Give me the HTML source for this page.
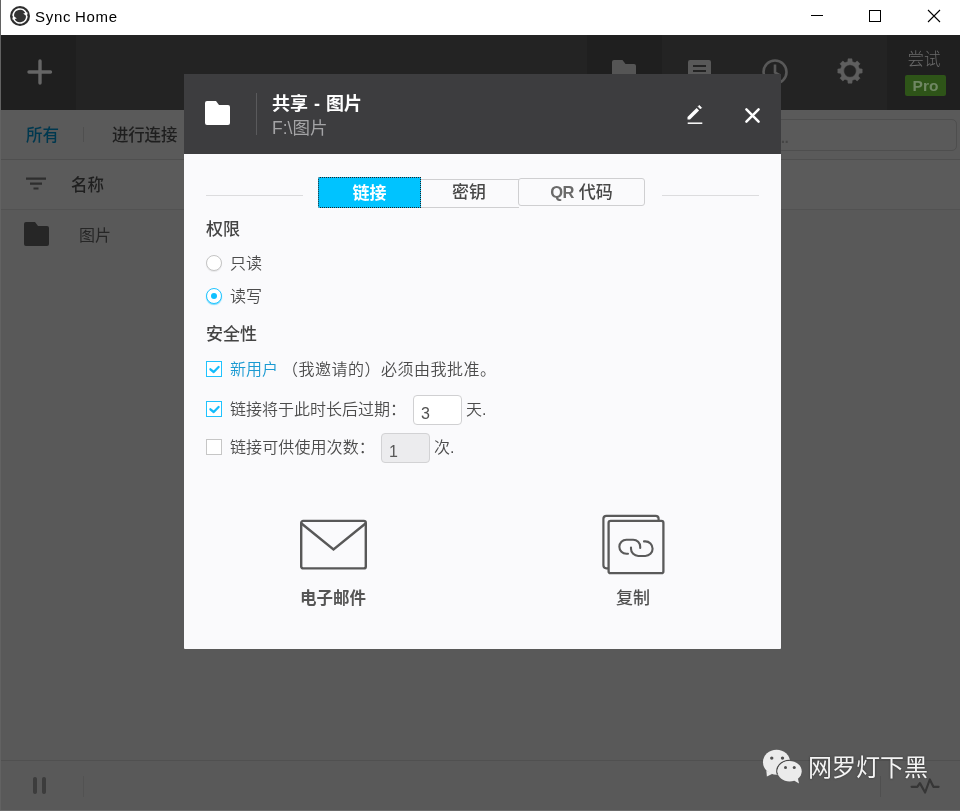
<!DOCTYPE html>
<html lang="zh-CN">
<head>
<meta charset="utf-8">
<title>Sync Home</title>
<style>
*{box-sizing:border-box;margin:0;padding:0}
html,body{width:960px;height:811px;overflow:hidden;background:#595959}
body{position:relative;font-family:"Liberation Sans","Noto Sans CJK SC",sans-serif;font-size:16px;color:#4a4a4a}
.abs{position:absolute}
#titlebar,#app,#dialog,#wm{will-change:transform}
#titlebar{left:0;top:0;width:960px;height:35px;background:#fff}
#titlebar .ttl{left:35px;top:7px;font-size:15px;color:#000;line-height:20px;letter-spacing:0.7px;word-spacing:-1px}
#app{left:1px;top:35px;width:959px;height:775px;background:#595959}
#toolbar{left:0;top:0;width:959px;height:75px;background:#232323}
#plus{left:0;top:0;width:75px;height:75px;background:#1f1f1f}
#tb-folder{left:586px;top:0;width:75px;height:75px;background:#1f1f1f}
#tb-pro{left:886px;top:0;width:73px;height:75px;background:#1f1f1f}
#tabs{left:0;top:75px;width:959px;height:50px;background:#5a5a5a;border-bottom:1px solid #4f4f4f}
#colhead{left:0;top:125px;width:959px;height:50px;background:#5b5b5b;border-bottom:1px solid #525252}
#statusbar{left:0;top:725px;width:959px;height:50px;border-top:1px solid #505050}
#dialog{left:184px;top:74px;width:597px;height:575px;border-radius:1px;background:#fafafc}
#dhead{left:0;top:0;width:597px;height:80px;background:#3d3d3f}
.cjk{font-family:"Liberation Sans","Noto Sans CJK SC",sans-serif}
#lborder{left:0;top:0;width:1px;height:811px;background:#626262}
#bborder{left:0;top:810px;width:960px;height:1px;background:#6c6c6c}
</style>
</head>
<body>
<div id="titlebar" class="abs">
  <svg class="abs" style="left:9px;top:4.900px" width="22" height="22" viewBox="0 0 22 22">
    <circle cx="11" cy="11" r="10" fill="#2e2e2e"/>
    <circle cx="11" cy="11" r="6.200" fill="#343434"/>
    <path d="M4.200 11.300A6.800 6.800 0 0 1 17.300 8.300" fill="none" stroke="#fff" stroke-width="1.700"/>
    <path d="M17.800 10.700A6.800 6.800 0 0 1 4.700 13.700" fill="none" stroke="#fff" stroke-width="1.700"/>
    <path d="M14.200 8.600L18.700 7.500L17.900 11.600z" fill="#fff"/>
    <path d="M7.800 13.400L3.300 14.500L4.100 10.400z" fill="#fff"/>
  </svg>
  <div class="abs ttl">Sync Home</div>
  <svg class="abs" style="left:800px;top:0" width="160" height="35" viewBox="0 0 160 35">
    <path d="M11 15.500h12" stroke="#000" stroke-width="1"/>
    <rect x="69.500" y="10.500" width="11" height="11" fill="none" stroke="#000" stroke-width="1"/>
    <path d="M128 10l12 12M140 10l-12 12" stroke="#000" stroke-width="1.100"/>
  </svg>
</div>

<div id="app" class="abs">
  <div id="toolbar" class="abs">
    <div id="plus" class="abs">
      <svg class="abs" style="left:26px;top:24px" width="26" height="26" viewBox="0 0 26 26"><path d="M13 2v22M2 13h21.500" stroke="#666" stroke-width="3.400" stroke-linecap="round"/></svg>
    </div>
    <div id="tb-folder" class="abs">
      <svg class="abs" style="left:25px;top:25px" width="24" height="22" viewBox="0 0 24 22"><path d="M2 0h8.500l3 4h8.500a2 2 0 0 1 2 2v14a2 2 0 0 1-2 2H2a2 2 0 0 1-2-2V2a2 2 0 0 1 2-2z" fill="#555"/></svg>
    </div>
    <svg class="abs" style="left:686px;top:24px" width="26" height="26" viewBox="0 0 26 26"><path d="M3 1h19a2 2 0 0 1 2 2v14a2 2 0 0 1-2 2H8l-7 6V3a2 2 0 0 1 2-2z" fill="#585858"/><path d="M6 7h13M6 12h13" stroke="#232323" stroke-width="2.200"/></svg>
    <svg class="abs" style="left:759.500px;top:22.500px" width="28" height="28" viewBox="0 0 28 28"><circle cx="14" cy="14" r="11.500" fill="none" stroke="#585858" stroke-width="2.600"/><path d="M14 6.500v8l5.500 3.200" fill="none" stroke="#585858" stroke-width="2.600"/></svg>
    <svg class="abs" style="left:834.500px;top:22.250px" width="28" height="28" viewBox="0 0 28 28"><path fill="#5e5e5e" stroke="#5e5e5e" stroke-width="0.600" stroke-linejoin="round" fill-rule="evenodd" d="M11.81 4.65 L12.04 1.86 L15.96 1.86 L16.19 4.65 L19.06 5.84 L21.20 4.03 L23.97 6.80 L22.16 8.94 L23.35 11.81 L26.14 12.04 L26.14 15.96 L23.35 16.19 L22.16 19.06 L23.97 21.20 L21.20 23.97 L19.06 22.16 L16.19 23.35 L15.96 26.14 L12.04 26.14 L11.81 23.35 L8.94 22.16 L6.80 23.97 L4.03 21.20 L5.84 19.06 L4.65 16.19 L1.86 15.96 L1.86 12.04 L4.65 11.81 L5.84 8.94 L4.03 6.80 L6.80 4.03 L8.94 5.84Z M14 7.700a6.300 6.300 0 1 0 0 12.600a6.300 6.300 0 1 0 0-12.600z"/></svg>
    <div id="tb-pro" class="abs">
      <div class="abs" style="left:1px;top:14px;width:72px;text-align:center;font-size:16.500px;line-height:20px;color:#6a6a6a;font-weight:300">尝试</div>
      <div class="abs" style="left:18px;top:39.500px;width:41px;height:21px;background:#2e5418;border-radius:2px;color:#6f8763;font-weight:bold;font-size:15.500px;line-height:21px;text-align:center">Pro</div>
    </div>
  </div>

  <div id="tabs" class="abs">
    <div class="abs" style="left:25px;top:14px;font-size:16.500px;line-height:22px;color:#00384f;font-weight:500">所有</div>
    <div class="abs" style="left:82px;top:17px;width:1px;height:15px;background:#4f4f4f"></div>
    <div class="abs" style="left:111px;top:14px;font-size:16.500px;line-height:22px;color:#1e1e1e;font-weight:500;letter-spacing:-0.2px">进行连接</div>
    <div class="abs" style="left:700px;top:9px;width:256px;height:32px;border:1px solid #4e4e4e;border-radius:5px;background:#5a5a5a"></div>
    <div class="abs" style="left:776px;top:20px;font-size:14px;color:#454545;font-weight:bold">...</div>
  </div>

  <div id="colhead" class="abs">
    <svg class="abs" style="left:24px;top:16px" width="22" height="16" viewBox="0 0 22 16"><path d="M1 2.700h20M5 7.600h12M8.500 12.500h5" stroke="#2e2e2e" stroke-width="2.200"/></svg>
    <div class="abs" style="left:70px;top:13.500px;font-size:16.500px;line-height:22px;color:#1f1f1f;font-weight:500">名称</div>
  </div>

  <div class="abs" style="left:0;top:175px;width:959px;height:50px">
    <svg class="abs" style="left:23px;top:12px" width="25" height="24" viewBox="0 0 25 24"><path d="M2 0h9l3 4h9a2 2 0 0 1 2 2v16a2 2 0 0 1-2 2H2a2 2 0 0 1-2-2V2a2 2 0 0 1 2-2z" fill="#262626"/></svg>
    <div class="abs" style="left:78px;top:15px;font-size:16px;line-height:22px;color:#262626;font-weight:400">图片</div>
  </div>

  <div id="statusbar" class="abs">
    <div class="abs" style="left:32px;top:16px;width:4px;height:17px;background:#3c3c3c;border-radius:2px"></div>
    <div class="abs" style="left:41px;top:16px;width:4px;height:17px;background:#3c3c3c;border-radius:2px"></div>
    <div class="abs" style="left:82px;top:15px;width:1px;height:21px;background:#525252"></div>
    <div class="abs" style="left:879px;top:15px;width:1px;height:21px;background:#4f4f4f"></div>
    <svg class="abs" style="left:908px;top:14px" width="32" height="20" viewBox="0 0 32 20"><path d="M2.600 11.800H8.300L10.900 8.100L16.100 17.500L20.800 4.500L24.400 11.800H29.600" fill="none" stroke="#363636" stroke-width="2.200" stroke-linejoin="round" stroke-linecap="round"/></svg>
  </div>
</div>
<div id="lborder" class="abs"></div>
<div id="bborder" class="abs"></div>

<!-- watermark -->
<svg class="abs" style="left:760px;top:745px" width="46" height="42" viewBox="0 0 46 42">
  <ellipse cx="16.550" cy="17.200" rx="13.550" ry="12.500" fill="#ebebeb"/>
  <path d="M6.300 25.500L6.900 31.400L12.500 28.800z" fill="#ebebeb"/>
  <circle cx="11.750" cy="13.100" r="1.700" fill="#505050"/><circle cx="22.500" cy="13.100" r="1.700" fill="#505050"/>
  <path d="M17.500 29.600A12.700 10.900 0 0 1 29.900 15.400" fill="none" stroke="#484848" stroke-width="1.400"/>
  <ellipse cx="29.600" cy="26.300" rx="12.100" ry="10.300" fill="#ebebeb"/>
  <path d="M34 35.500L39 38.400L37.800 33z" fill="#ebebeb"/>
  <circle cx="25.500" cy="22.500" r="1.500" fill="#505050"/><circle cx="34.250" cy="22.500" r="1.500" fill="#505050"/>
</svg>
<div id="wm" class="abs" style="left:808px;top:753px;font-size:24px;line-height:30px;color:#f4f4f4;white-space:nowrap;text-shadow:0 0 2px rgba(40,40,40,.8)">网罗灯下黑</div>

<div id="dialog" class="abs">
  <div id="dhead" class="abs">
    <svg class="abs" style="left:21px;top:27px" width="25" height="24" viewBox="0 0 25 24"><path d="M2 0h9l3 4h9a2 2 0 0 1 2 2v16a2 2 0 0 1-2 2H2a2 2 0 0 1-2-2V2a2 2 0 0 1 2-2z" fill="#fff"/></svg>
    <div class="abs" style="left:72px;top:19px;width:1px;height:42px;background:#5a5a5c"></div>
    <div class="abs" style="left:88px;top:18px;font-size:18px;line-height:24px;color:#fff;font-weight:bold;white-space:nowrap;word-spacing:1px">共享 - 图片</div>
    <div class="abs" style="left:88px;top:42.500px;font-size:17.500px;line-height:22px;color:#a4a4a6;white-space:nowrap;font-weight:400">F:\图片</div>
    <svg class="abs" style="left:501px;top:28px" width="20" height="24" viewBox="0 0 20 24"><path d="M2.500 17.500V15L11.600 5.900L14.100 8.400L5 17.500z" fill="#fff"/><path d="M13 4.600L14.300 3.300L16.700 5.700L15.400 7z" fill="#fff" stroke="#fff" stroke-width="0.500" stroke-linejoin="round"/><path d="M2.700 21.200h14.600" stroke="#fff" stroke-width="1.500"/></svg>
    <svg class="abs" style="left:559px;top:33px" width="19" height="18" viewBox="0 0 19 18"><path d="M3.400 2.400L15.600 14.600M15.600 2.400L3.400 14.600" stroke="#fff" stroke-width="2.500" stroke-linecap="round"/></svg>
  </div>

  <!-- tab strip -->
  <div class="abs" style="left:22px;top:121px;width:97px;height:1px;background:#dcdcde"></div>
  <div class="abs" style="left:478px;top:121px;width:97px;height:1px;background:#dcdcde"></div>
  <div class="abs" style="left:134px;top:103px;width:103px;height:31px;background:#00c3ff;border-radius:2px 0 0 2px;outline:1px dotted #222;outline-offset:-1px"></div>
  <div class="abs" style="left:134px;top:107.500px;width:103px;text-align:center;font-size:17px;line-height:24px;color:#fff;font-weight:bold">链接</div>
  <div class="abs" style="left:237px;top:105px;width:98px;height:29px;border:1px solid #cfcfd1;border-left:none;border-right:none;background:#fafafc"></div>
  <div class="abs" style="left:236px;top:107px;width:98px;text-align:center;font-size:17px;line-height:24px;color:#484848;font-weight:500">密钥</div>
  <div class="abs" style="left:334px;top:104px;width:127px;height:28px;border:1px solid #cfcfd1;border-radius:3px;background:#fafafc"></div>
  <div class="abs" style="left:334px;top:106px;width:127px;text-align:center;font-size:17px;line-height:24px;color:#484848;font-weight:500;white-space:nowrap"><span style="font-weight:bold;font-size:16.500px;color:#6a6a6a;letter-spacing:-0.500px">QR</span> 代码</div>

  <div class="abs" style="left:22px;top:143.500px;font-size:17px;line-height:24px;color:#444;font-weight:500">权限</div>
  <div class="abs" style="left:22px;top:181px;width:16px;height:16px;border:1.500px solid #c4c4c4;border-radius:50%;background:#fff;box-shadow:0 1px 1px rgba(0,0,0,.08)"></div>
  <div class="abs" style="left:46px;top:177.800px;font-size:16px;line-height:24px;color:#4c4c4c;font-weight:350">只读</div>
  <div class="abs" style="left:22px;top:214px;width:16px;height:16px;border:1.700px solid #22c5ff;border-radius:50%;background:#fff;box-shadow:0 1px 1px rgba(0,190,255,.55)"></div>
  <div class="abs" style="left:26.600px;top:218.600px;width:6.800px;height:6.800px;border-radius:50%;background:#0fc0ff"></div>
  <div class="abs" style="left:46px;top:210.800px;font-size:16px;line-height:24px;color:#4c4c4c;font-weight:350">读写</div>

  <div class="abs" style="left:22px;top:249px;font-size:17px;line-height:24px;color:#444;font-weight:500">安全性</div>

  <div class="abs" style="left:22px;top:287px;width:16px;height:16px;border:1.500px solid #1fc3ff;background:#fff"></div>
  <svg class="abs" style="left:22px;top:287px" width="16" height="16" viewBox="0 0 16 16"><path d="M4.400 8.300L7.700 11L12.600 6" fill="none" stroke="#14bcfb" stroke-width="2.300" stroke-linecap="round" stroke-linejoin="round"/></svg>
  <div class="abs" style="left:46px;top:283.800px;font-size:16px;line-height:24px;color:#4c4c4c;font-weight:350;white-space:nowrap"><span style="color:#1a9ad2">新用户</span><span style="margin-left:4px;letter-spacing:0.500px">（我邀请的）必须由我批准。</span></div>

  <div class="abs" style="left:22px;top:327px;width:16px;height:16px;border:1.500px solid #1fc3ff;background:#fff"></div>
  <svg class="abs" style="left:22px;top:327px" width="16" height="16" viewBox="0 0 16 16"><path d="M4.400 8.300L7.700 11L12.600 6" fill="none" stroke="#14bcfb" stroke-width="2.300" stroke-linecap="round" stroke-linejoin="round"/></svg>
  <div class="abs" style="left:46px;top:323.800px;font-size:16px;line-height:24px;color:#4c4c4c;font-weight:350;white-space:nowrap">链接将于此时长后过期：</div>
  <div class="abs" style="left:229px;top:321px;width:49px;height:30px;border:1px solid #d0d0d2;border-radius:4px;background:#fff"></div>
  <div class="abs" style="left:237px;top:327.500px;font-size:16px;line-height:24px;color:#505050">3</div>
  <div class="abs" style="left:282px;top:323.800px;font-size:16px;line-height:24px;color:#4c4c4c;font-weight:350;white-space:nowrap">天.</div>

  <div class="abs" style="left:22px;top:365px;width:16px;height:16px;border:1.500px solid #c6c6c6;background:#fff"></div>
  <div class="abs" style="left:46px;top:361.800px;font-size:16px;line-height:24px;color:#4c4c4c;font-weight:350;white-space:nowrap;letter-spacing:0.100px">链接可供使用次数：</div>
  <div class="abs" style="left:197px;top:359px;width:49px;height:30px;border:1px solid #d2d2d4;border-radius:4px;background:#ececee"></div>
  <div class="abs" style="left:205px;top:365.500px;font-size:16px;line-height:24px;color:#585858">1</div>
  <div class="abs" style="left:250px;top:361.800px;font-size:16px;line-height:24px;color:#4c4c4c;font-weight:350;white-space:nowrap">次.</div>

  <!-- email -->
  <svg class="abs" style="left:115px;top:445px" width="69" height="51" viewBox="0 0 69 51"><rect x="2.200" y="1.900" width="64.600" height="47.500" rx="2" fill="none" stroke="#585858" stroke-width="2.400"/><path d="M2.500 4.500l32 26 32-26" fill="none" stroke="#585858" stroke-width="2.400"/></svg>
  <div class="abs" style="left:99px;top:512px;width:100px;text-align:center;font-size:16.500px;line-height:24px;color:#555;font-weight:bold">电子邮件</div>

  <!-- copy -->
  <svg class="abs" style="left:417px;top:439px" width="66" height="63" viewBox="0 0 66 63"><rect x="2.400" y="2.800" width="55.200" height="52.500" rx="3" fill="none" stroke="#5a5a5a" stroke-width="2.200"/><rect x="7.600" y="7.800" width="54.800" height="52.400" rx="2" fill="#fafafc" stroke="#5a5a5a" stroke-width="2.300"/><path d="M27 40.800H25.400A7.050 7.050 0 0 1 25.400 26.700H32.200A7 7 0 0 1 39.200 33.700V35" fill="none" stroke="#5a5a5a" stroke-width="2.100" stroke-linecap="round"/><path d="M30 34.500V35.700A7.300 7.300 0 0 0 37.300 43H44.300A7.300 7.300 0 0 0 44.300 28.400H43" fill="none" stroke="#5a5a5a" stroke-width="2.100" stroke-linecap="round"/></svg>
  <div class="abs" style="left:399px;top:512.700px;width:100px;text-align:center;font-size:17px;line-height:24px;color:#505050;font-weight:500">复制</div>
</div>
</body>
</html>
